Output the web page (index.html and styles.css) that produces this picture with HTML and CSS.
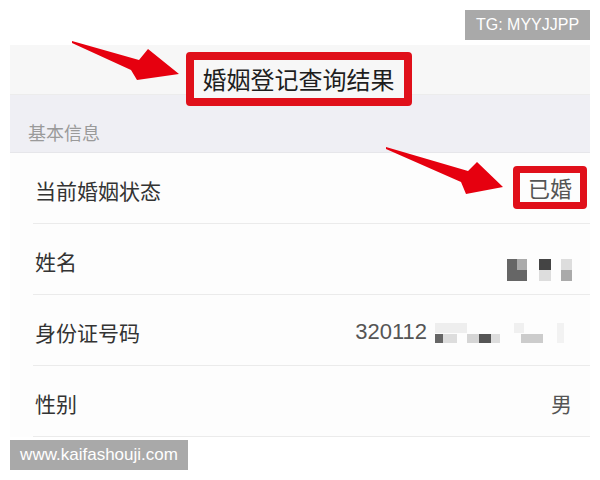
FILE: index.html
```html
<!DOCTYPE html>
<html lang="zh-CN">
<head>
<meta charset="utf-8">
<title>婚姻登记查询结果</title>
<link rel="stylesheet" href="styles.css">
</head>
<body>
<div class="phone">
  <div class="navbar">
    <span class="title">婚姻登记查询结果</span>
  </div>
  <div class="section-head">基本信息</div>
  <div class="list">
    <div class="row">
      <span class="label">当前婚姻状态</span>
      <span class="value status">已婚</span>
    </div>
    <div class="row">
      <span class="label">姓名</span>
      <svg class="mosaic name-mosaic" width="65" height="22" viewBox="0 0 65 22">
        <rect x="0" y="0" width="10" height="22" fill="#666"/>
        <rect x="10" y="0" width="10" height="11" fill="#aaa"/>
        <rect x="10" y="11" width="10" height="11" fill="#666"/>
        <rect x="32" y="0" width="12" height="11" fill="#444"/>
        <rect x="32" y="11" width="12" height="11" fill="#ddd"/>
        <rect x="54" y="0" width="11" height="11" fill="#ddd"/>
        <rect x="54" y="11" width="11" height="11" fill="#aaa"/>
      </svg>
    </div>
    <div class="row">
      <span class="label">身份证号码</span>
      <span class="value id">320112<svg class="mosaic id-mosaic" width="130" height="20" viewBox="0 0 130 20">
        <rect x="0" y="0" width="32" height="10" fill="#eee"/>
        <rect x="0" y="11" width="8" height="9" fill="#666"/>
        <rect x="8" y="11" width="14" height="9" fill="#ddd"/>
        <rect x="32" y="11" width="12" height="9" fill="#d5d5d5"/>
        <rect x="44" y="11" width="12" height="9" fill="#555"/>
        <rect x="56" y="11" width="9" height="9" fill="#ddd"/>
        <rect x="79" y="0" width="10" height="10" fill="#f0f0f0"/>
        <rect x="86" y="11" width="22" height="9" fill="#ccc"/>
        <rect x="122" y="0" width="7" height="20" fill="#f2f2f2"/>
      </svg></span>
    </div>
    <div class="row">
      <span class="label">性别</span>
      <span class="value">男</span>
    </div>
  </div>
</div>

<svg class="arrows" width="600" height="480" viewBox="0 0 600 480">
  <polygon points="72,41 139,60 148,49 179,74 137,80 131,70 72,43" fill="#e6000f"/>
  <polygon points="386,147 468,171 477,162 503,187 466,194 461,182 386,149" fill="#e6000f"/>
</svg>

<div class="wm wm-top">TG: MYYJJPP</div>
<div class="wm wm-bottom">www.kaifashouji.com</div>
</body>
</html>
```
FILE: styles.css
```css
html, body {
  margin: 0;
  padding: 0;
  background: #ffffff;
}
body {
  width: 600px;
  height: 480px;
  overflow: hidden;
  position: relative;
  font-family: "Noto Sans CJK SC", "Noto Sans", sans-serif;
}
.phone {
  margin: 45px 10px 0 10px;
  width: 580px;
}
.navbar {
  height: 50px;
  background: #f7f7f7;
  border-bottom: 1px solid #ececec;
  box-sizing: border-box;
  display: flex;
  justify-content: center;
  align-items: flex-start;
  padding-top: 7px;
  position: relative;
  z-index: 2;
}
.title {
  display: block;
  border: 8px solid #e0101a;
  border-radius: 4px;
  background: #f7f7f7;
  padding: 0 9px;
  height: 38px;
  line-height: 38px;
  font-size: 24px;
  font-weight: 400;
  color: #1e1e1e;
  margin-left: -3px;
}
.section-head {
  height: 58px;
  box-sizing: border-box;
  background: #efeff4;
  padding: 24px 0 0 18px;
  font-size: 18px;
  line-height: 26px;
  color: #9a9a9a;
  border-bottom: 1px solid #e6e6ea;
}
.list {
  background: #fdfdfd;
}
.row {
  height: 71px;
  box-sizing: border-box;
  display: flex;
  align-items: center;
  justify-content: space-between;
  padding: 2px 18px 0 25px;
  position: relative;
}
.row::after {
  content: "";
  position: absolute;
  left: 23px;
  right: 0;
  bottom: 0;
  height: 1px;
  background: #ebebeb;
}
.label {
  font-size: 21px;
  color: #333333;
}
.value {
  font-size: 21px;
  color: #555555;
}
.status {
  border: 7px solid #e0101a;
  border-radius: 4px;
  padding: 0 8px;
  height: 29px;
  line-height: 29px;
  font-size: 22px;
  margin-right: -15px;
  margin-top: -5px;
}
.name-mosaic {
  margin-top: 18px;
}
.id {
  display: flex;
  align-items: center;
  font-family: "Liberation Sans", "Noto Sans CJK SC", sans-serif;
  font-size: 22px;
  margin-right: 7px;
}
.id-mosaic {
  margin-left: 8px;
  margin-top: 2px;
}
.arrows {
  position: absolute;
  left: 0;
  top: 0;
  z-index: 3;
  pointer-events: none;
}
.wm {
  position: absolute;
  background: #a9a9a9;
  color: #ffffff;
  font-family: "Liberation Sans", Arial, sans-serif;
  height: 30px;
  line-height: 30px;
  box-sizing: border-box;
  z-index: 4;
}
.wm-top {
  left: 465px;
  top: 10px;
  width: 125px;
  font-size: 16px;
  text-align: center;
}
.wm-bottom {
  left: 10px;
  top: 440px;
  width: 178px;
  font-size: 17px;
  text-align: center;
}
```
